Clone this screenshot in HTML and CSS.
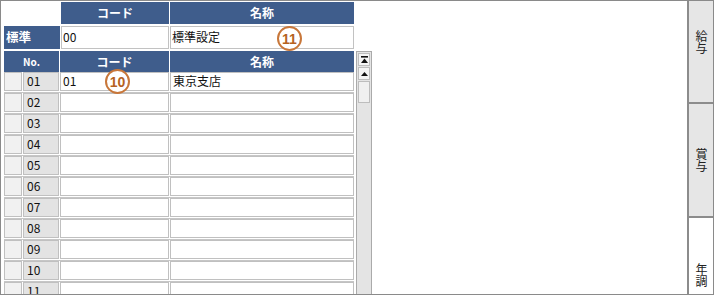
FILE: index.html
```html
<!DOCTYPE html>
<html lang="ja">
<head>
<meta charset="utf-8">
<link rel="stylesheet" href="styles.css">
</head>
<body>
<div class="frame">
  <div class="main">
    <div class="top-row head-row">
      <div class="c-label blank"></div>
      <div class="c-code hdr">コード</div>
      <div class="c-name hdr">名称</div>
    </div>
    <div class="top-row std-row">
      <div class="c-label hdr std">標準</div>
      <div class="c-code inp">00</div>
      <div class="c-name inp">標準設定</div>
    </div>
    <div class="grid-wrap">
      <div class="table">
        <div class="t-head">
          <div class="h-no hdr small">No.</div>
          <div class="h-code hdr">コード</div>
          <div class="h-name hdr">名称</div>
        </div>
        <div class="t-row"><div class="strip"></div><div class="no">01</div><div class="code">01</div><div class="name">東京支店</div></div>
        <div class="t-row"><div class="strip"></div><div class="no">02</div><div class="code"></div><div class="name"></div></div>
        <div class="t-row"><div class="strip"></div><div class="no">03</div><div class="code"></div><div class="name"></div></div>
        <div class="t-row"><div class="strip"></div><div class="no">04</div><div class="code"></div><div class="name"></div></div>
        <div class="t-row"><div class="strip"></div><div class="no">05</div><div class="code"></div><div class="name"></div></div>
        <div class="t-row"><div class="strip"></div><div class="no">06</div><div class="code"></div><div class="name"></div></div>
        <div class="t-row"><div class="strip"></div><div class="no">07</div><div class="code"></div><div class="name"></div></div>
        <div class="t-row"><div class="strip"></div><div class="no">08</div><div class="code"></div><div class="name"></div></div>
        <div class="t-row"><div class="strip"></div><div class="no">09</div><div class="code"></div><div class="name"></div></div>
        <div class="t-row"><div class="strip"></div><div class="no">10</div><div class="code"></div><div class="name"></div></div>
        <div class="t-row"><div class="strip"></div><div class="no">11</div><div class="code"></div><div class="name"></div></div>
      </div>
      <div class="scrollbar">
        <div class="sb-btn">
          <svg width="9" height="8" viewBox="0 0 9 8"><rect x="1" y="0" width="7" height="1.6" fill="#111"/><path d="M4.5 2.5 L8 7 L1 7 Z" fill="#111"/></svg>
        </div>
        <div class="sb-btn">
          <svg width="9" height="6" viewBox="0 0 9 6"><path d="M4.5 1 L8 5 L1 5 Z" fill="#111"/></svg>
        </div>
        <div class="sb-thumb"></div>
        <div class="sb-track"></div>
      </div>
    </div>
    <div class="badge b11">11</div>
    <div class="badge b10">10</div>
  </div>
  <div class="tabs">
    <div class="tab t1"><span class="vt">給与</span></div>
    <div class="tab t2"><span class="vt">賞与</span></div>
    <div class="tab t3 active"><span class="vt">年調</span></div>
  </div>
</div>
</body>
</html>
```
FILE: styles.css
```css
* { box-sizing: border-box; }
html, body { margin: 0; padding: 0; background: #fff; }
body {
  font-family: "Noto Sans CJK JP", "Liberation Sans", sans-serif;
  font-size: 12px;
  color: #111;
}
.frame {
  width: 714px;
  height: 295px;
  border: 1px solid #8a8a8a;
  display: flex;
  overflow: hidden;
}
.main {
  position: relative;
  width: 686px;
  padding: 1px 0 0 3px;
  display: flex;
  flex-direction: column;
  overflow: hidden;
}
.top-row {
  display: flex;
  gap: 1px;
  flex-shrink: 0;
}
.head-row { height: 22px; margin-bottom: 2px; }
.std-row { height: 23px; margin-bottom: 2px; }
.c-label { width: 56px; }
.c-code { width: 108px; }
.c-name { width: 184px; }
.blank { background: #fff; }
.hdr {
  background: #3f5d8c;
  color: #fff;
  font-weight: bold;
  display: flex;
  align-items: center;
  justify-content: center;
  line-height: 1;
}
.std { justify-content: flex-start; padding-left: 2px; font-size: 12.5px; }
.inp {
  border: 1px solid #c2c2c2;
  background: #fff;
  display: flex;
  align-items: center;
  padding: 0 0 1px 1px;
  line-height: 1;
}
.grid-wrap {
  display: flex;
  gap: 2px;
  flex: 1 0 auto;
}
.table {
  width: 350px;
  display: flex;
  flex-direction: column;
}
.t-head {
  display: flex;
  gap: 1px;
  height: 21px;
  flex-shrink: 0;
}
.h-no { width: 55px; }
.h-code { width: 109px; }
.h-name { width: 184px; }
.small { font-size: 10px; }
.t-row {
  display: flex;
  height: 21px;
  border-bottom: 1px solid #c6c6c6;
  padding-bottom: 1px;
  gap: 1px;
  flex-shrink: 0;
}
.t-row > div {
  height: 19px;
  border: 1px solid #c0c0c0;
  display: flex;
  align-items: center;
  line-height: 1;
  padding-bottom: 2px;
}
.strip { width: 18px; background: #f1f1f1; }
.no { width: 36px; background: #e3e3e3; padding-left: 3px; }
.code { width: 109px; background: #fff; padding-left: 2px; }
.name { width: 184px; background: #fff; padding-left: 2px; }
.scrollbar {
  width: 16px;
  border: 1px solid #aaa;
  background: #e4e4e4;
  display: flex;
  flex-direction: column;
  gap: 1px;
  padding: 1px;
}
.sb-btn {
  height: 13px;
  background: #f4f4f4;
  border: 1px solid #bdbdbd;
  display: flex;
  align-items: center;
  justify-content: center;
}
.sb-thumb {
  height: 22px;
  background: #f0f0f0;
  border: 1px solid #bdbdbd;
}
.sb-track { flex: 1; }
.badge {
  position: absolute;
  width: 25px;
  height: 25px;
  border: 2px solid #c8773a;
  border-radius: 50%;
  background: #fff;
  color: #b5621f;
  font-family: "Liberation Sans", sans-serif;
  font-weight: bold;
  font-size: 14px;
  display: flex;
  align-items: center;
  justify-content: center;
  line-height: 1;
}
.b11 { left: 276px; top: 25px; }
.b10 { left: 104px; top: 68px; }
.tabs {
  width: 26px;
  border-left: 2px solid #8c8c8c;
  display: flex;
  flex-direction: column;
}
.tab {
  background: #e6e6e6;
  border-bottom: 2px solid #8c8c8c;
  display: flex;
  justify-content: center;
  flex-shrink: 0;
}
.t1 { height: 103px; padding-top: 29px; }
.t2 { height: 114px; padding-top: 44px; }
.t3 { flex: 1; padding-top: 45px; border-bottom: none; background: #fff; }
.vt {
  writing-mode: vertical-rl;
  font-size: 12px;
  line-height: 1;
  letter-spacing: 0;
  color: #222;
}
```
